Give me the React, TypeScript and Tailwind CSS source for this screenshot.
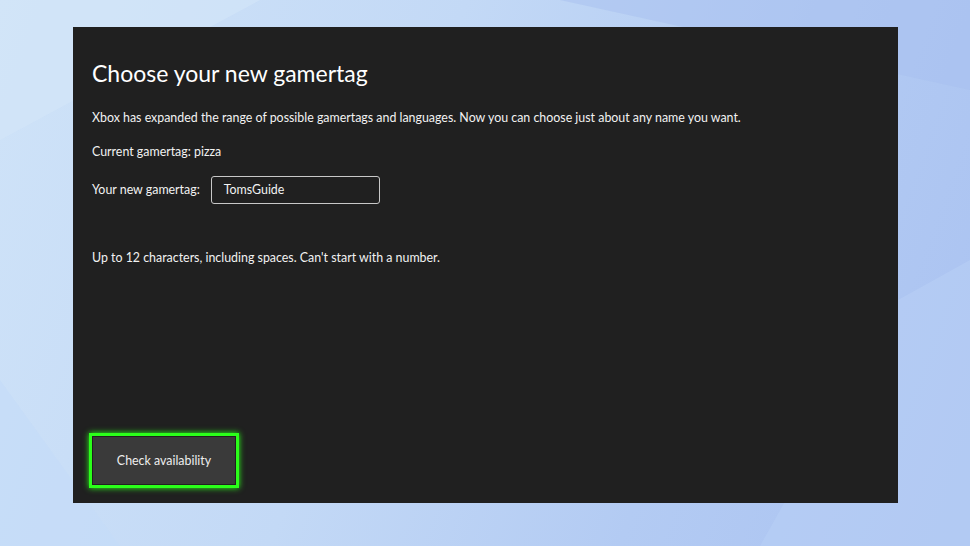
import React from 'react';

const font = { fontFamily: 'Lato, "Open Sans", sans-serif' };

const GamertagPanel: React.FC = () => (
    <div className="w-[825px] h-[476px] bg-[#202020] flex flex-col pl-[19px] pr-6 pt-[31px] pb-[15px] text-[#f2f2f2]">
        <h1 className="text-[23px] leading-[30px] tracking-[0px] text-white font-normal">Choose your new gamertag</h1>
        <p className="mt-[21px] text-[12.4px] leading-[18px]">
            Xbox has expanded the range of possible gamertags and languages. Now you can choose just about any name you want.
        </p>
        <p className="mt-[16px] text-[12.4px] leading-[18px]">Current gamertag: pizza</p>
        <div className="mt-[15px] flex items-center gap-[11px]">
            <span className="text-[12.4px] leading-[18px]">Your new gamertag:</span>
            <div className="w-[169px] h-[28px] border border-[#c8c8c8] rounded-[3px] flex items-center px-[12px] text-[12.4px]">
                TomsGuide
            </div>
        </div>
        <p className="mt-[45px] text-[12.4px] leading-[18px]">Up to 12 characters, including spaces. Can&apos;t start with a number.</p>
        <div className="mt-auto -ml-[3px]">
            <div className="w-[150px] h-[55px] border-[3px] border-[#2bff1a] shadow-[0_0_6px_#2bff1a] p-[1px] flex">
                <button className="flex-1 bg-[#3a3a3a] text-[12.4px] text-[#eeeeee] pt-[2px]">Check availability</button>
            </div>
        </div>
    </div>
);

export default function App() {
    return (
        <div
            className="relative w-[970px] h-[546px] overflow-hidden bg-[linear-gradient(110deg,#cfe3f8_0%,#c3d9f6_40%,#b3cbf3_70%,#aac2f1_100%)] pt-[27px] pl-[73px]"
            style={font}
        >
            <svg className="absolute inset-0" width="970" height="546" viewBox="0 0 970 546">
                <polygon points="0,0 260,0 0,140" fill="#d3e6f9" opacity="0.6" />
                <polygon points="0,380 120,546 0,546" fill="#c4dcf8" opacity="0.7" />
                <polygon points="898,300 970,260 970,546 760,546" fill="#b8cef5" opacity="0.6" />
                <polygon points="560,0 970,0 970,90" fill="#a8c0f0" opacity="0.5" />
            </svg>
            <div className="relative">
                <GamertagPanel />
            </div>
        </div>
    );
}
